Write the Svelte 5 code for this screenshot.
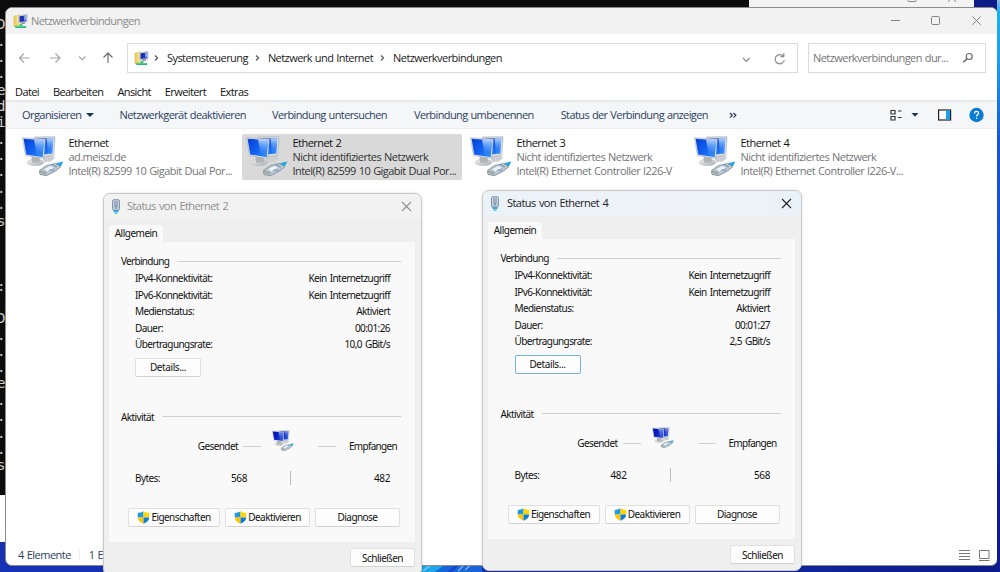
<script>
  const crumbs = ['Systemsteuerung', 'Netzwerk und Internet', 'Netzwerkverbindungen'];
  const menus = ['Datei', 'Bearbeiten', 'Ansicht', 'Erweitert', 'Extras'];
  const adapters = [
    { name: 'Ethernet', net: 'ad.meiszl.de', dev: 'Intel(R) 82599 10 Gigabit Dual Por...' },
    { name: 'Ethernet 2', net: 'Nicht identifiziertes Netzwerk', dev: 'Intel(R) 82599 10 Gigabit Dual Por...', selected: true },
    { name: 'Ethernet 3', net: 'Nicht identifiziertes Netzwerk', dev: 'Intel(R) Ethernet Controller I226-V' },
    { name: 'Ethernet 4', net: 'Nicht identifiziertes Netzwerk', dev: 'Intel(R) Ethernet Controller I226-V...' },
  ];
  const dialogs = [
    { title: 'Status von Ethernet 2', time: '00:01:26', rate: '10,0 GBit/s', sent: '568', received: '482', active: false },
    { title: 'Status von Ethernet 4', time: '00:01:27', rate: '2,5 GBit/s', sent: '482', received: '568', active: true },
  ];
  const rows = (d) => [
    ['IPv4-Konnektivität:', 'Kein Internetzugriff'],
    ['IPv6-Konnektivität:', 'Kein Internetzugriff'],
    ['Medienstatus:', 'Aktiviert'],
    ['Dauer:', d.time],
    ['Übertragungsrate:', d.rate],
  ];
  const consoleLines = [
    [24, 'D'], [41, '.'], [57, '.'], [73, '.'], [90, 'e'], [106, 'd'], [122, 'i'], [139, '.'], [155, '.'], [171, '.'],
    [188, '.'], [204, '.'], [221, 's'], [286, ':'], [318, 'D'], [335, '.'], [351, '.'], [367, '.'], [383, 'e'],
    [400, '.'], [416, '.'], [433, '.'], [449, '.'], [465, 's'],
  ];
</script>

{#snippet folderIcon()}
  <svg class="folder" viewBox="0 0 16 16" width="15" height="15">
    <path d="M1 2.500 6 .8v12L1 13.500z" fill="#ecd060" stroke="#cdb052" stroke-width=".5" />
    <path d="M4 1h5v10H4z" fill="#f8e88f" />
    <path d="M6 1.500 15 .6v8l-9 1z" fill="#dfe3e7" stroke="#a1a9b1" stroke-width=".6" />
    <path d="m7 2.400 7-.7v6.100l-7 .8z" fill="#1c30b4" />
    <path d="M11.500 2 14 1.700v4.100l-2 1.600z" fill="#7fa4ee" />
    <path d="M8.500 9 12 8.600l1 1.700-4 .5z" fill="#8d979f" />
    <path d="M7 10.800h3v2h4V15H2.500v-2.200H7z" fill="#22b877" />
    <path d="M3 13.400h10.500" stroke="#63dba6" stroke-width=".7" />
  </svg>
{/snippet}

{#snippet monitors(dark)}
  <svg class="monitors" viewBox="0 0 42 42">
    <defs>
      <linearGradient id={dark ? 'scrD' : 'scr'} x1="0" y1="0" x2="1" y2=".8">
        <stop offset="0" stop-color={dark ? '#0410a0' : '#0a3fd6'} />
        <stop offset=".55" stop-color={dark ? '#0e22c4' : '#1060f0'} />
        <stop offset="1" stop-color={dark ? '#2f50d8' : '#2a86f6'} />
      </linearGradient>
      <linearGradient id={dark ? 'glareD' : 'glare'} x1="0" y1="0" x2="0" y2="1">
        <stop offset="0" stop-color="#cfe8ff" stop-opacity={dark ? 0.6 : 0.85} />
        <stop offset=".8" stop-color="#5aa2f8" stop-opacity=".15" />
      </linearGradient>
      <linearGradient id="stand" x1="0" y1="0" x2="1" y2="1">
        <stop offset="0" stop-color="#f6f6f6" /><stop offset="1" stop-color="#a6a9ac" />
      </linearGradient>
    </defs>
    <path d="m20 20 9-1 4 3-4 3.500-7 .5z" fill="#cccfd1" />
    <path d="M12.500 1 33 .8l-1.200 18.700-14 1.500z" fill="#dadfe2" stroke="#a9b1b7" stroke-width=".7" />
    <path d="m14.500 2.500 16.800-.2-1.100 15.200-12.700 1.200z" fill="url(#{dark ? 'scrD' : 'scr'})" />
    <path d="m24.500 2.500 6.800-.2-1.100 15.200-4 .4z" fill="url(#{dark ? 'glareD' : 'glare'})" />
    <ellipse cx="13.500" cy="26.400" rx="8.200" ry="3.300" fill="url(#stand)" stroke="#bdc1c4" stroke-width=".6" />
    <path d="m9.500 20 8 1.200.5 5-8 .6z" fill="#b0b4b7" />
    <path d="m.5 1.700 22.800 1.600L21.600 22.500 3.400 19.500z" fill="#e6e9eb" stroke="#a5adb3" stroke-width=".6" />
    <path d="m1.600 2.700 20.600 1.600-1.500 16.900L4.200 18.500z" fill="url(#{dark ? 'scrD' : 'scr'})" />
    <path d="m12 3.500 10.200.8-1.500 16.900-5.500-.9z" fill="url(#{dark ? 'glareD' : 'glare'})" />
    <path d="m31 29.700 4.500-3 5.800-1.200-1.800 4-5.200 2.500z" fill="#25a9dd" />
    <path d="m17.500 34.500 7-5 9-2 5.500 3-5.500 4.500-9 4.700-6.500-1.200z" fill="#bac8d8" stroke="#70869c" stroke-width=".8" />
    <path d="m21.500 33 6.500-3.500 5 1.800-8 4.700z" fill="#eef3f6" stroke="#91a3b4" stroke-width=".5" />
    <path d="m18 36 6 2.300M18 34.500l6.500 2.500" stroke="#899a63" stroke-width=".8" />
    <path d="m30 28.500 5 2.600M27.500 34l5 .5" stroke="#6f859b" stroke-width=".8" />
  </svg>
{/snippet}

{#snippet shield()}
  <svg class="shield" viewBox="0 0 14 14" width="13" height="13">
    <path d="M7 .4C5 1.700 3 2.100.8 2.100V7H7z" fill="#1c9be4" />
    <path d="M7 .4c2 1.300 4 1.700 6.200 1.700V7H7z" fill="#ffd400" />
    <path d="M.8 7H7v6.700C3.200 12.200 1 10 .8 7z" fill="#ffc400" />
    <path d="M13.200 7H7v6.700C10.800 12.200 13 10 13.200 7z" fill="#0d7fd2" />
  </svg>
{/snippet}

<div class="desktop">
  <div class="console">
    {#each consoleLines as [y, ch]}
      <span style:top="{y - 8}px">{ch}</span>
    {/each}
  </div>
  <div class="blank"></div>
  <div class="behind">
    <svg width="52" height="8" viewBox="0 0 52 8" fill="none" stroke="#888" stroke-width="1">
      <rect x="1" y="-6" width="8" height="7.500" rx="1" />
      <path d="m41 2 8-9M49 2l-8-9" />
    </svg>
  </div>
  <svg class="bloom" width="62" height="10" viewBox="0 0 62 10">
    <rect width="62" height="10" fill="#1765d8" />
    <path d="M0 0h26L12 10H0z" fill="#1fa6e6" />
    <path d="m3 7 8-6M38 7l6-6M45 6l7-6" stroke="#a9d7fb" stroke-width="1.400" opacity=".7" />
    <path d="m28 10 10-10" stroke="#1d43cc" stroke-width="3" />
  </svg>

  <div class="window">
    <header class="title">
      {@render folderIcon()}
      <span>Netzwerkverbindungen</span>
      <svg class="caption" width="92" height="12" viewBox="0 0 92 12" fill="none" stroke="#858585" stroke-width="1">
        <path d="M1 5.500h9" /><rect x="41.500" y="1.500" width="8" height="8" rx="1" /><path d="m82.300 1.300 8.600 8.600M90.900 1.300l-8.600 8.600" />
      </svg>
    </header>

    <div class="nav">
      <svg class="arrows" width="98" height="14" viewBox="0 0 98 14" fill="none" stroke="#a4a4a4" stroke-width="1.100">
        <path d="M11.500 7H1.500M6 2.500 1.500 7 6 11.500M32 7h10M37.500 2.500 42 7l-4.500 4.500" />
        <path d="m61 5.500 3.200 3.200 3.200-3.200" />
        <path d="M90 12V2M85.500 6.500 90 2l4.500 4.500" stroke="#666" />
      </svg>
      <div class="address">
        {@render folderIcon()}
        {#each crumbs as c}
          <svg class="chev" width="5" height="8" viewBox="0 0 5 8" fill="none" stroke="#555" stroke-width="1.200"><path d="m1 1.500 2.500 2.500L1 6.500" /></svg>
          <span>{c}</span>
        {/each}
        <svg class="tools" width="46" height="14" viewBox="0 0 46 14" fill="none" stroke="#8a8a8a" stroke-width="1.200">
          <path d="m2 6 3.300 3.300L8.600 6" />
          <path d="M42.300 4.200A4.600 4.600 0 1 0 43.300 8M42.800 1.300v3.400h-3.400" />
        </svg>
      </div>
      <div class="search">
        <span>Netzwerkverbindungen dur...</span>
        <svg width="12" height="12" viewBox="0 0 12 12" fill="none" stroke="#666" stroke-width="1.200"><circle cx="7.200" cy="4.500" r="3" /><path d="M5 6.700 1.300 10.300" stroke-width="1.600" /></svg>
      </div>
    </div>

    <nav class="menus">{#each menus as m}<span>{m}</span>{/each}</nav>

    <div class="toolbar">
      <span class="t1">Organisieren</span>
      <i class="tri"></i>
      <span class="t2">Netzwerkgerät deaktivieren</span>
      <span class="t3">Verbindung untersuchen</span>
      <span class="t4">Verbindung umbenennen</span>
      <span class="t5">Status der Verbindung anzeigen</span>
      <svg class="more" width="8" height="7" viewBox="0 0 8 7" fill="none" stroke="#23395b" stroke-width="1.200"><path d="m1 1 2.300 2.300L1 5.600M4.500 1l2.300 2.300-2.300 2.300" /></svg>
      <svg class="views" width="96" height="16" viewBox="0 0 96 16">
        <path d="M2 3.500h4v3.500H2zM2 9.500h4V13H2zM9 4h3.500M9 10.500h3.500" fill="none" stroke="#333" stroke-width="1.200" />
        <path d="M22.500 6h7L26 9.700z" fill="#1b365d" />
        <rect x="49.600" y="3" width="12" height="10" fill="#fff" stroke="#222" stroke-width="1.200" />
        <path d="M57 3.600h4v8.800h-4z" fill="#1ba0e8" />
        <circle cx="87.500" cy="8" r="7.200" fill="#0a7dd2" />
        <path d="M85.500 6.400c0-2.700 4-2.600 4-.2 0 1.500-1.900 1.500-1.900 3.200M87.600 10.800v1.300" fill="none" stroke="#fff" stroke-width="1.300" />
      </svg>
    </div>

    <div class="adapters">
      {#each adapters as a}
        <div class="adapter" class:selected={a.selected}>
          {@render monitors(false)}
          <div class="info"><b>{a.name}</b><span>{a.net}</span><span>{a.dev}</span></div>
        </div>
      {/each}
    </div>

    <footer class="status">
      <span>4 Elemente</span><i></i><span>1 Element ausgewählt</span>
      <svg width="31" height="12" viewBox="0 0 31 12" fill="none" stroke="#777" stroke-width="1">
        <path d="M0 1.500h11M0 4.500h11M0 7.500h11M0 10.500h11" />
        <path d="M20.500 1.500h9.500v8h-9.500zM20 11.500h10.500" />
      </svg>
    </footer>
  </div>

  {#each dialogs as d, i}
    <section class="dialog" class:active={d.active} class:second={i === 1}>
      <header>
        <svg width="10" height="16" viewBox="0 0 10 16">
          <rect x="1.500" y=".7" width="7" height="10.500" rx="1.500" fill="#c6d1df" stroke="#8295ad" />
          <path d="M4 2v5.500h2V2M3.500 9h3" fill="none" stroke="#65788f" stroke-width=".8" />
          <path d="M2.500 11h5v2h-5z" fill="#3fa7cf" /><path d="M3.500 13h3v2h-3z" fill="#6fc8df" />
        </svg>
        <span>{d.title}</span>
        <svg class="close" width="11" height="11" viewBox="0 0 11 11" stroke="currentColor" stroke-width="1.100"><path d="m1 1 9 9M10 1l-9 9" /></svg>
      </header>
      <div class="tab">Allgemein</div>
      <div class="panel">
        <div class="group"><span>Verbindung</span><hr /></div>
        <div class="rows">
          {#each rows(d) as [k, v]}<div><span>{k}</span><span>{v}</span></div>{/each}
        </div>
        <button class="details">Details...</button>
        <div class="group act"><span>Aktivität</span><hr /></div>
        <div class="flow">
          <span class="sent">Gesendet</span><hr />
          {@render monitors(true)}
          <hr /><span class="recv">Empfangen</span>
        </div>
        <div class="bytes"><span>Bytes:</span><span class="num">{d.sent}</span><i></i><span class="num">{d.received}</span></div>
        <div class="actions">
          <button>{@render shield()}<span>Eigenschaften</span></button>
          <button>{@render shield()}<span>Deaktivieren</span></button>
          <button><span>Diagnose</span></button>
        </div>
      </div>
      <button class="dismiss">Schließen</button>
    </section>
  {/each}
</div>

<style>
  :global(body) { margin: 0; overflow: hidden; }
  svg { display: block; flex: none; }
  .desktop { position: relative; width: 1000px; height: 572px; overflow: hidden; background: linear-gradient(90deg, #1631b4, #1630ad 60%, #0b1a87); font: 11px/14px "Open Sans", sans-serif; color: #222; letter-spacing: -0.52px; word-spacing: 0.6px; white-space: nowrap; }
  .desktop::after { content: ""; position: absolute; right: 0; top: 0; width: 3px; height: 572px; background: linear-gradient(#8fbbe3 0, #18b2ec 12px, #1f9fe8 60px, #1657cf 140px, #1749cc 350px, #0b1d8f 480px); }
  .console { position: absolute; left: 0; top: 0; width: 749px; height: 495px; background: #0c0c0c; color: #ccc; font: 14px/16px "DejaVu Sans Mono", monospace; letter-spacing: 0; }
  .console span { position: absolute; left: -3px; }
  .blank { position: absolute; left: 0; top: 495px; width: 10px; height: 47px; background: #fff; }
  .behind { position: absolute; left: 749px; top: 0; width: 225px; height: 10px; background: #f3f3f3; }
  .behind svg { margin-left: 158px; }
  .bloom { position: absolute; left: 420px; top: 564px; }
  .window { position: absolute; left: 5px; top: 7px; width: 991px; height: 557px; border: 1px solid #8b8b8b; border-radius: 7px; background: #fff; overflow: hidden; display: flex; flex-direction: column; }
  .title { height: 26px; flex: none; background: #f2f2f2; display: flex; align-items: center; padding: 0 15px 0 7px; color: #8b8b8b; }
  .title span { margin-left: 3px; }
  .title .caption { margin-left: auto; }
  .nav { height: 48px; flex: none; display: flex; align-items: center; }
  .arrows { margin-left: 12px; }
  .address { margin-left: 11px; height: 28px; border: 1px solid #dcdcdc; display: flex; align-items: center; padding-left: 6px; width: 663px; }
  .address span { margin: 0 0 0 8px; }
  .chev { margin-left: 7px; }
  .address .folder + .chev { margin-left: 5px; }
  .tools { margin: 2px 10px 0 auto; }
  .search { margin-left: 10px; width: 172px; height: 28px; border: 1px solid #dcdcdc; display: flex; align-items: center; padding-left: 4px; color: #757575; }
  .search svg { margin: 0 11px 0 auto; }
  .address, .title, .search { letter-spacing: -0.56px; }
  .menus { height: 18px; flex: none; display: flex; align-items: center; gap: 14px; padding: 2px 0 0 9px; box-sizing: border-box; line-height: 16px; letter-spacing: -0.6px; color: #111; }
  .toolbar { height: 26px; flex: none; border-top: 2px solid #e6e9eb; border-bottom: 1px solid #eceef0; background: #f4f6f8; display: flex; align-items: center; color: #2b4264; padding-left: 16px; letter-spacing: -0.6px; }
  .tri { border: 4px solid transparent; border-top-color: #1b365d; border-bottom: 0; margin: 0 26px 0 4px; }
  .t1 { letter-spacing: -0.56px; }
  .t2 { margin-right: 26px; }
  .t3, .t4 { margin-right: 27px; }
  .more { margin-left: 21px; }
  .views { margin: 0 12px 0 auto; }
  .adapters { display: flex; gap: 4px; padding: 5px 12px 0; }
  .adapter { width: 220px; height: 46px; border-radius: 2px; display: flex; flex: none; }
  .monitors { width: 42px; height: 42px; }
  .adapter .monitors { margin: 2px 0 0 4px; }
  .selected { background: #d9d9d9; }
  .info { display: flex; flex-direction: column; padding: 2px 0 0 4.500px; color: #757575; letter-spacing: -0.54px; }
  .info b { font-weight: 400; color: #111; }
  .selected .info { color: #333; }
  .status { margin-top: auto; height: 20px; display: flex; align-items: center; padding: 0 7px 0 12px; color: #2b4264; }
  .status i { width: 1px; height: 12px; background: #eee; margin: 0 9px 0 8px; }
  .status svg { margin-left: auto; }
  .dialog { position: absolute; z-index: 2; left: 103px; top: 193px; width: 317px; height: 381px; border: 1px solid #c9c9c9; border-radius: 7px; background: #efefef; box-shadow: 0 0 3px #0002; display: flex; flex-direction: column; font-family: "Noto Sans", sans-serif; font-size: 10px; color: #111; letter-spacing: -0.58px; word-spacing: 1px; overflow: hidden; }
  .dialog.second { left: 482px; top: 190px; width: 318px; height: 379px; }
  .dialog header { height: 25px; flex: none; background: #f2f2f2; display: flex; align-items: center; padding: 0 9px 0 7px; font: 11px/14px "Open Sans", sans-serif; letter-spacing: -0.56px; color: #8f8f8f; }
  .dialog header span { margin: -1px 0 0 6px; }
  .dialog.active header { background: linear-gradient(90deg, #eaf3f8, #eef2f8 60%, #e9f2f8); color: #222; }
  .dialog.active header span { margin-left: 7px; }
  .dialog .close { margin: -1px 0 0 auto; }
  .tab { margin: 6px 0 0 5px; width: 54px; height: 17px; line-height: 16px; text-align: center; background: #f9f9f9; flex: none; letter-spacing: -0.7px; }
  .tab { letter-spacing: -0.5px; }
  .panel { margin: 0 6px 0 5px; height: 300px; flex: none; background: #f9f9f9; display: flex; flex-direction: column; }
  .group { display: flex; align-items: center; margin: 12px 14px 0 12px; height: 14px; letter-spacing: -0.7px; }
  .second .panel { padding-left: 0.500px; }
  .group.act { margin-top: 33px; letter-spacing: -0.6px; }
  hr { margin: 0; border: 0; height: 1px; background: #d0d0d0; }
  .group hr { flex: 1; margin-left: 8px; }
  .rows { margin: 3px 25px 0 26px; }
  .rows div { display: flex; justify-content: space-between; height: 16.500px; line-height: 14px; }
  button { font: inherit; letter-spacing: inherit; color: inherit; background: #fdfdfd; border: 1px solid #e0e0e0; border-bottom-color: #d2d2d2; border-radius: 2px; padding: 0; display: flex; align-items: center; justify-content: center; box-sizing: border-box; }
  .details { width: 66px; height: 19px; margin: 4px 0 0 26px; flex: none; letter-spacing: -0.4px; }
  .active .details { border-color: #71b1e4; }
  .flow { display: flex; height: 24px; margin-top: 6px; padding-bottom: 1px; }
  .flow span { width: 48px; margin-top: 9px; line-height: 14px; }
  .flow .sent { margin-left: 80px; width: 49px; text-align: right; }
  .flow hr { width: 18px; margin: 16px 0 0 5px; }
  .flow .monitors { width: 22px; height: 22px; margin-left: 11px; }
  .flow .monitors + hr { margin-left: 24px; }
  .flow .recv { margin-left: 13px; letter-spacing: -0.7px; }
  .bytes { display: grid; grid-template-columns: 52px 60px 44px 1fr; margin: 15px 25px 0 26px; align-items: center; height: 16px; }
  .bytes .num { text-align: right; letter-spacing: -0.4px; }
  .bytes i { width: 1px; height: 14px; background: #bbb; justify-self: end; }
  .actions { display: flex; gap: 5px; margin: 22px 0 0 19px; letter-spacing: -0.55px; }
  .actions button { width: 92px; height: 19px; }
  .actions button + button { width: 85px; }
  .actions .shield { margin-right: 1px; }
  .dismiss { width: 65px; height: 19px; flex: none; margin: 6px 6px 0 auto; letter-spacing: -0.5px; }
</style>
